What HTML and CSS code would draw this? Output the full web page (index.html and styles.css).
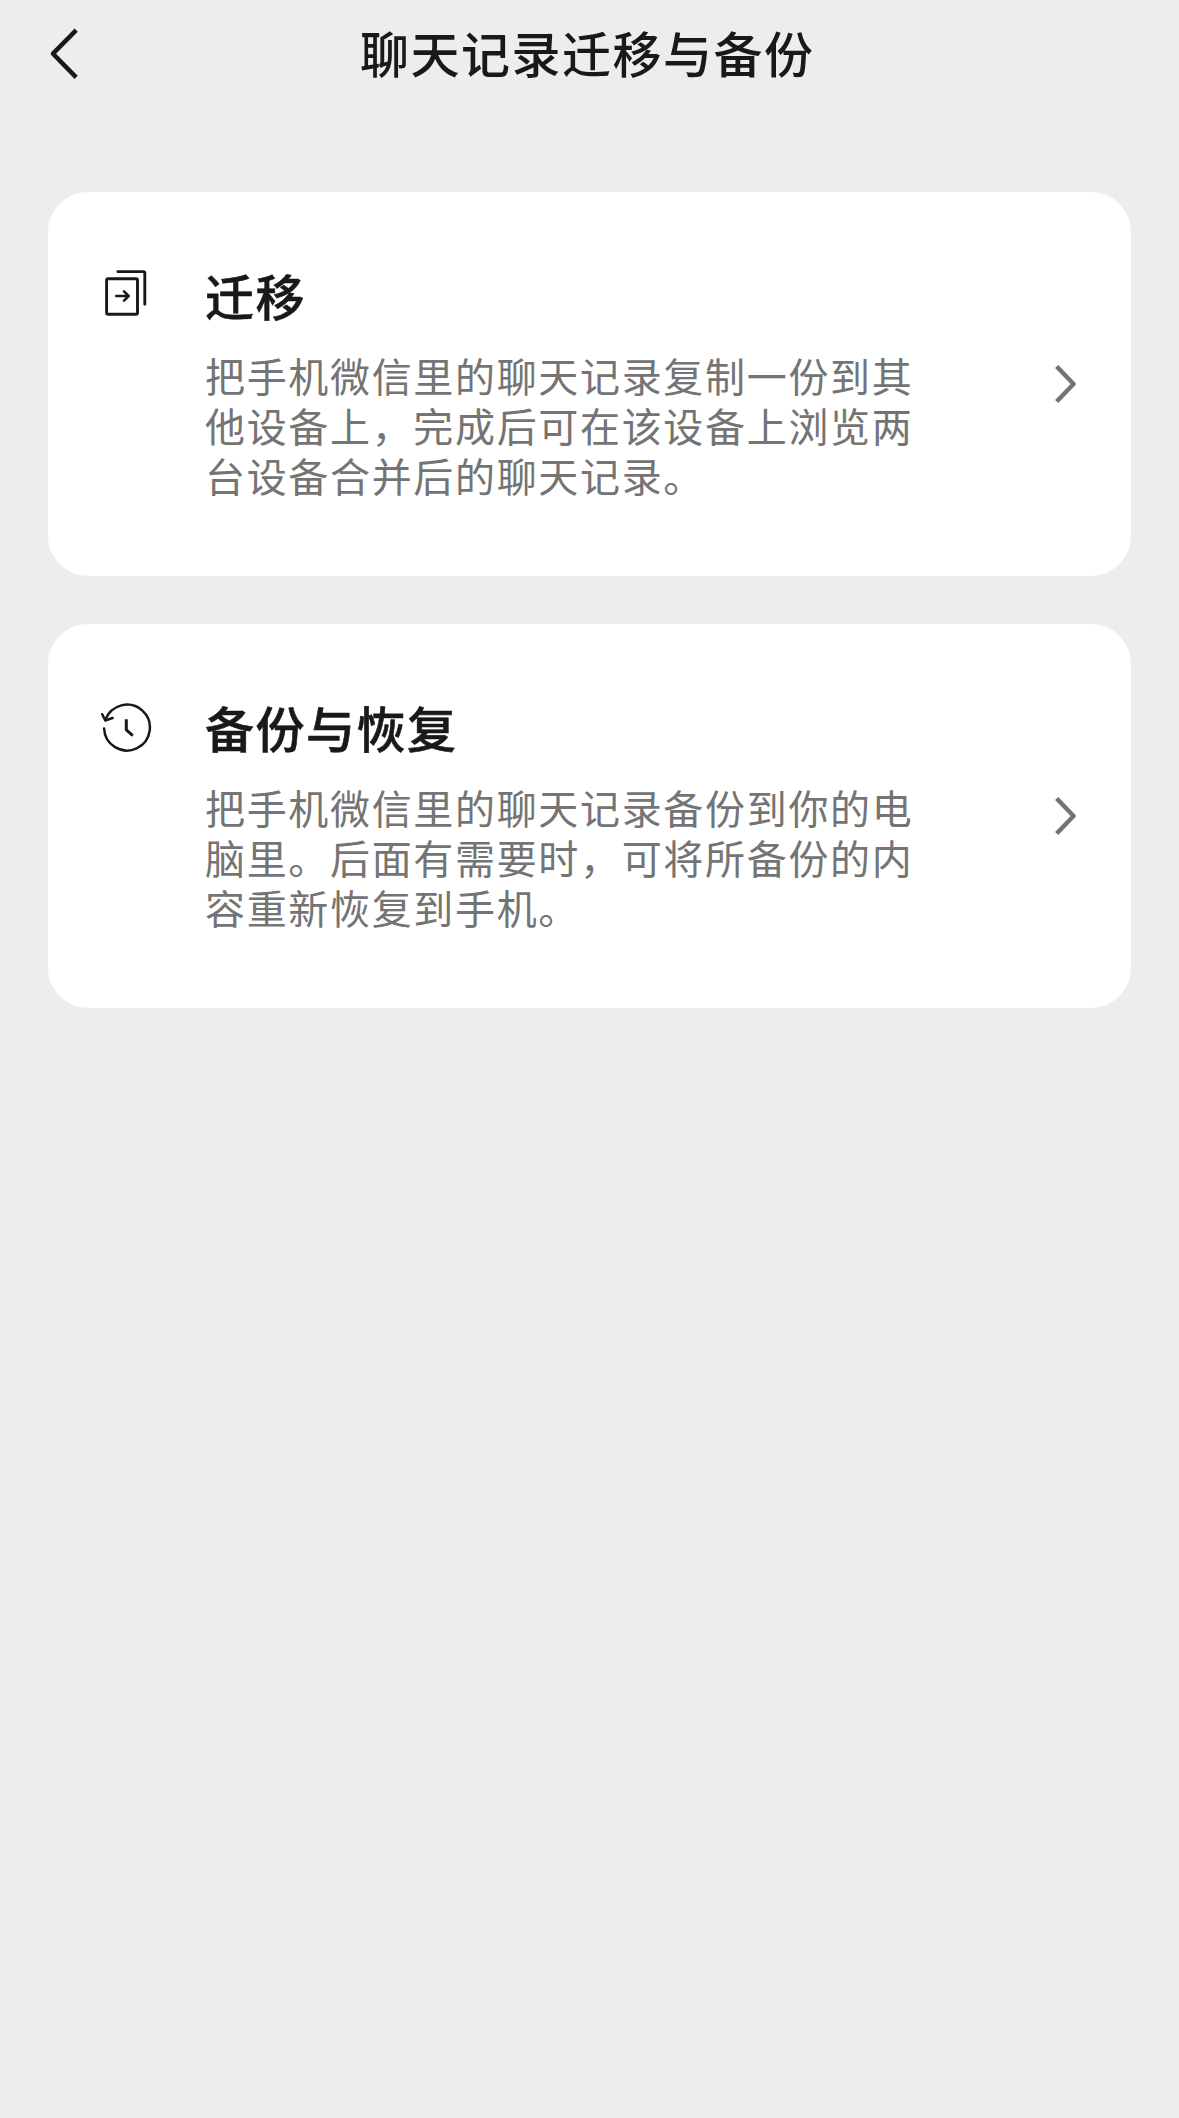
FILE: index.html
```html
<!DOCTYPE html>
<html lang="zh-CN">
    <head>
        <meta charset="utf-8">
        <title>聊天记录迁移与备份</title>
        <link rel="stylesheet" href="styles.css">
    </head>
    <body>
        <div class="hd">
            <svg class="back" width="32" height="56" viewBox="0 0 32 56">
                <path d="M28.2 4.2L5 27.7L28.2 51.4"/>
            </svg>
            <h1>聊天记录迁移与备份</h1>
        </div>
        <div class="list">
            <div class="card">
                <svg class="icon" width="54" height="54" viewBox="0 0 54 54">
                    <rect x="7.6" y="11.7" width="30.9" height="35.6" rx="1.5"/>
                    <path d="M18.8 4.6H44.6Q45.8 4.6 45.8 5.8V37.3"/>
                    <path class="thin" d="M17.2 29H29.5M25 24.3L29.7 29L25 33.7"/>
                </svg>
                <div class="info">
                    <h2>迁移</h2>
                    <p>把手机微信里的聊天记录复制一份到其<br>他设备上，完成后可在该设备上浏览两<br>台设备合并后的聊天记录。</p>
                </div>
                <svg class="arrow" width="26" height="42" viewBox="0 0 26 42">
                    <path d="M2.7 3.5L19.6 21L2.7 38.5"/>
                </svg>
            </div>
            <div class="card">
                <svg class="icon" width="54" height="54" viewBox="0 0 54 54">
                    <path class="thin" d="M6.4 20.9A22.9 22.9 0 1 1 5.1 29.5"/>
                    <path class="thin" d="M3.2 15.2L6.3 21.5L13.6 19"/>
                    <path class="hand" d="M27.3 20.3V30.8L33.8 36.6"/>
                </svg>
                <div class="info">
                    <h2>备份与恢复</h2>
                    <p>把手机微信里的聊天记录备份到你的电<br>脑里。后面有需要时，可将所备份的内<br>容重新恢复到手机。</p>
                </div>
                <svg class="arrow" width="26" height="42" viewBox="0 0 26 42">
                    <path d="M2.7 3.5L19.6 21L2.7 38.5"/>
                </svg>
            </div>
        </div>
    </body>
</html>
```

FILE: styles.css
```css
*
{
    box-sizing: border-box;
}

body
{
    margin: 0;
    min-height: 100vh;
    background-color: #ededed;
    font-family: "Noto Sans CJK SC", sans-serif;
    color: #191919;
}

h1, h2, p
{
    margin: 0;
    white-space: nowrap;
}

h1, h2
{
    font-size: 49px;
    font-weight: 500;
    letter-spacing: 1.5px;
}

svg
{
    display: block;
    flex: none;
    fill: none;
    stroke: #191919;
}

.hd
{
    display: flex;
    align-items: center;
    height: 108px;
    padding-left: 48px;
}

.hd h1
{
    margin-left: 280px;
    line-height: 104px;
    padding-bottom: 4px;
}

.back
{
    stroke-width: 4.5;
    stroke-linejoin: round;
}

.list
{
    display: flex;
    flex-direction: column;
    gap: 48px;
    padding: 84px 48px 0;
}

.card
{
    display: flex;
    align-items: center;
    height: 384px;
    padding: 0 51px;
    background-color: #fff;
    border-radius: 40px;
}

.icon
{
    align-self: flex-start;
    margin-top: 75px;
    stroke-width: 2.9;
    stroke-linecap: round;
    stroke-linejoin: round;
}

.icon .thin
{
    stroke-width: 2.5;
}

.icon .hand
{
    stroke-width: 3;
    stroke-linecap: butt;
}

.info
{
    flex: 1;
    padding-left: 52px;
}

.info h2
{
    line-height: 62px;
    margin-bottom: 24px;
    -webkit-text-stroke: 0.6px #191919;
}

.info p
{
    font-size: 40px;
    line-height: 50px;
    letter-spacing: 1.67px;
    color: #747474;
    margin-bottom: 4px;
}

.arrow
{
    stroke: #747474;
    stroke-width: 4.5;
    stroke-linejoin: round;
}
```
